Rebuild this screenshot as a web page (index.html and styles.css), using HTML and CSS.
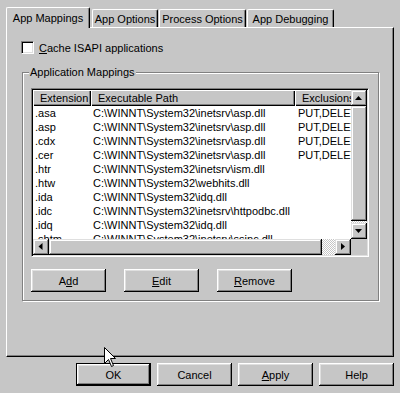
FILE: index.html
```html
<!DOCTYPE html>
<html>
<head>
    <title>Application Configuration</title>
    <link rel="stylesheet" href="styles.css">
</head>
<body>

    <div class="dialog">
        <div class="tabs">
            <div class="tab selected">App Mappings</div>
            <div class="tab tab-options">App Options</div>
            <div class="tab tab-process">Process Options</div>
            <div class="tab tab-debug">App Debugging</div>
        </div>

        <div class="page">
            <label class="check-row">
                <span class="checkbox"></span>
                <span><u>C</u>ache ISAPI applications</span>
            </label>

            <div class="group">
                <span class="group-caption">Application Mappings</span>

                <div class="listview">
                    <div class="lv-view">
                        <div class="lv-header">
                            <div class="col-ext">Extension</div>
                            <div class="col-path">Executable Path</div>
                            <div class="col-excl">Exclusions</div>
                        </div>
                        <div class="lv-row"><div class="col-ext">.asa</div><div class="col-path">C:\WINNT\System32\inetsrv\asp.dll</div><div class="col-excl">PUT,DELETE</div></div>
                        <div class="lv-row"><div class="col-ext">.asp</div><div class="col-path">C:\WINNT\System32\inetsrv\asp.dll</div><div class="col-excl">PUT,DELETE</div></div>
                        <div class="lv-row"><div class="col-ext">.cdx</div><div class="col-path">C:\WINNT\System32\inetsrv\asp.dll</div><div class="col-excl">PUT,DELETE</div></div>
                        <div class="lv-row"><div class="col-ext">.cer</div><div class="col-path">C:\WINNT\System32\inetsrv\asp.dll</div><div class="col-excl">PUT,DELETE</div></div>
                        <div class="lv-row"><div class="col-ext">.htr</div><div class="col-path">C:\WINNT\System32\inetsrv\ism.dll</div><div class="col-excl"></div></div>
                        <div class="lv-row"><div class="col-ext">.htw</div><div class="col-path">C:\WINNT\System32\webhits.dll</div><div class="col-excl"></div></div>
                        <div class="lv-row"><div class="col-ext">.ida</div><div class="col-path">C:\WINNT\System32\idq.dll</div><div class="col-excl"></div></div>
                        <div class="lv-row"><div class="col-ext">.idc</div><div class="col-path">C:\WINNT\System32\inetsrv\httpodbc.dll</div><div class="col-excl"></div></div>
                        <div class="lv-row"><div class="col-ext">.idq</div><div class="col-path">C:\WINNT\System32\idq.dll</div><div class="col-excl"></div></div>
                        <div class="lv-row"><div class="col-ext">.shtm</div><div class="col-path">C:\WINNT\System32\inetsrv\ssinc.dll</div><div class="col-excl"></div></div>
                    </div>

                    <div class="vscroll">
                        <div class="sb-btn">
                            <svg width="16" height="16" viewBox="0 0 16 16"><path d="M7.5 6 L4 10 L11 10 Z" fill="#000"/></svg>
                        </div>
                        <div class="sb-thumb vthumb"></div>
                        <div class="sb-track"></div>
                        <div class="sb-btn">
                            <svg width="16" height="16" viewBox="0 0 16 16"><path d="M4 6 L11 6 L7.5 10 Z" fill="#000"/></svg>
                        </div>
                    </div>

                    <div class="hscroll">
                        <div class="sb-btn">
                            <svg width="16" height="16" viewBox="0 0 16 16"><path d="M9.5 4 L9.5 11 L5.5 7.5 Z" fill="#000"/></svg>
                        </div>
                        <div class="sb-thumb hthumb"></div>
                        <div class="sb-track"></div>
                        <div class="sb-btn">
                            <svg width="16" height="16" viewBox="0 0 16 16"><path d="M6 4 L6 11 L10 7.5 Z" fill="#000"/></svg>
                        </div>
                    </div>

                    <div class="sb-corner"></div>
                </div>

                <div class="group-buttons">
                    <button class="btn">A<u>d</u>d</button>
                    <button class="btn"><u>E</u>dit</button>
                    <button class="btn"><u>R</u>emove</button>
                </div>
            </div>
        </div>

        <div class="dialog-buttons">
            <button class="btn default">OK</button>
            <button class="btn">Cancel</button>
            <button class="btn"><u>A</u>pply</button>
            <button class="btn">Help</button>
        </div>
    </div>

    <!-- mouse pointer -->
    <svg class="cursor" width="13" height="21" viewBox="0 0 13 21">
        <path d="M0.5 0.5 L0.5 16.5 L4.5 12.5 L7.5 19.5 L9.5 18.5 L6.5 11.5 L11.5 11.5 Z" fill="#fff" stroke="#000" stroke-width="1"/>
    </svg>

</body>
</html>
```

FILE: styles.css
```css
body {
    margin: 0;
    background-color: #c6c6c6;
    font-family: "Liberation Sans", Arial, sans-serif;
    font-size: 11px;
    color: #000;
}

.dialog {
    width: 400px;
    height: 393px;
    padding: 7px 0 0 6px;
    box-sizing: border-box;
    overflow: hidden;
}

/* tab strip */
.tabs {
    display: flex;
    align-items: flex-end;
    height: 20px;
    position: relative;
    z-index: 1;
}

.tab {
    height: 18px;
    box-sizing: border-box;
    padding-top: 1px;
    display: flex;
    align-items: center;
    justify-content: center;
    white-space: nowrap;
    background-color: #c6c6c6;
    border-top: 1px solid #fff;
    border-left: 1px solid #fff;
    border-right: 1px solid #000;
    border-radius: 2px 2px 0 0;
    box-shadow: inset -1px 0 #808080;
}

.tab.selected {
    width: 84px;
    height: 21px;
    padding-top: 0;
    margin-bottom: -1px;
}

.tab-options {
    width: 66px;
    margin-left: 2px;
}

.tab-process {
    width: 87px;
    margin-left: 1px;
}

.tab-debug {
    width: 87px;
    margin-left: 1px;
}

/* tab page */
.page {
    width: 388px;
    height: 330px;
    box-sizing: border-box;
    padding: 13px 0 0 14px;
    border-top: 1px solid #fff;
    border-left: 1px solid #fff;
    border-right: 1px solid #000;
    border-bottom: 1px solid #000;
    box-shadow: inset -1px -1px #808080;
}

.check-row {
    display: flex;
    align-items: center;
    gap: 5px;
    height: 13px;
}

.checkbox {
    width: 13px;
    height: 13px;
    box-sizing: border-box;
    background-color: #fff;
    border: 1px solid;
    border-color: #808080 #fff #fff #808080;
    box-shadow: inset 1px 1px #000, inset -1px -1px #dfdfdf;
}

/* group box */
.group {
    position: relative;
    width: 357px;
    box-sizing: border-box;
    margin: 18px 0 0 1px;
    padding: 15px 9px 8px 8px;
    border: 1px solid #808080;
    box-shadow: inset 1px 1px #fff, 1px 1px #fff;
}

.group-caption {
    position: absolute;
    left: 6px;
    top: -7px;
    padding: 0 1px;
    line-height: 13px;
    background-color: #c6c6c6;
}

/* list view */
.listview {
    width: 338px;
    height: 169px;
    box-sizing: border-box;
    padding: 1px;
    border: 1px solid;
    border-color: #808080 #fff #fff #808080;
    box-shadow: inset 1px 1px #000, inset -1px -1px #dfdfdf;
    display: grid;
    grid-template-columns: 318px 16px;
    grid-template-rows: 149px 16px;
}

.lv-view {
    overflow: hidden;
    background-color: #fff;
}

.lv-header {
    display: flex;
    height: 16px;
}

.lv-header > div {
    flex: none;
    box-sizing: border-box;
    padding-left: 7px;
    line-height: 16px;
    white-space: nowrap;
    overflow: hidden;
    background-color: #c6c6c6;
    box-shadow: inset 1px 1px #fff, inset -1px -1px #000, inset -2px -2px #808080;
}

.lv-row {
    display: flex;
    height: 14px;
    line-height: 14px;
}

.lv-row > div {
    flex: none;
    box-sizing: border-box;
    padding-left: 2px;
    white-space: nowrap;
    overflow: hidden;
}

.col-ext {
    width: 58px;
}

.col-path {
    width: 204px;
}

.col-excl {
    width: 80px;
}

.lv-row .col-excl {
    padding-left: 3px;
}

/* scroll bars */
.vscroll,
.hscroll {
    display: flex;
    background: repeating-conic-gradient(#fff 0 25%, #c6c6c6 0 50%) 0 0 / 2px 2px;
}

.vscroll {
    flex-direction: column;
}

.sb-btn,
.sb-thumb {
    flex: none;
    box-sizing: border-box;
    background-color: #c6c6c6;
    box-shadow: inset -1px -1px #000, inset 1px 1px #dfdfdf, inset -2px -2px #808080, inset 2px 2px #fff;
}

.sb-btn {
    width: 16px;
    height: 16px;
}

.sb-btn svg {
    display: block;
}

.vthumb {
    width: 16px;
    height: 115px;
}

.hthumb {
    width: 273px;
    height: 16px;
}

.sb-track {
    flex: 1;
}

.sb-corner {
    background-color: #c6c6c6;
}

/* buttons */
.btn {
    width: 75px;
    height: 23px;
    box-sizing: border-box;
    padding: 0;
    border: none;
    background-color: #c6c6c6;
    font-family: "Liberation Sans", Arial, sans-serif;
    font-size: 11px;
    color: #000;
    box-shadow: inset -1px -1px #000, inset 1px 1px #fff, inset -2px -2px #808080, inset 2px 2px #dfdfdf;
}

.btn.default {
    border: 1px solid #000;
}

.group-buttons {
    display: flex;
    gap: 18px;
    margin-top: 12px;
}

.dialog-buttons {
    display: flex;
    justify-content: flex-end;
    gap: 6px;
    margin-top: 6px;
    padding-right: 6px;
}

.cursor {
    position: absolute;
    left: 104px;
    top: 347px;
}
```
